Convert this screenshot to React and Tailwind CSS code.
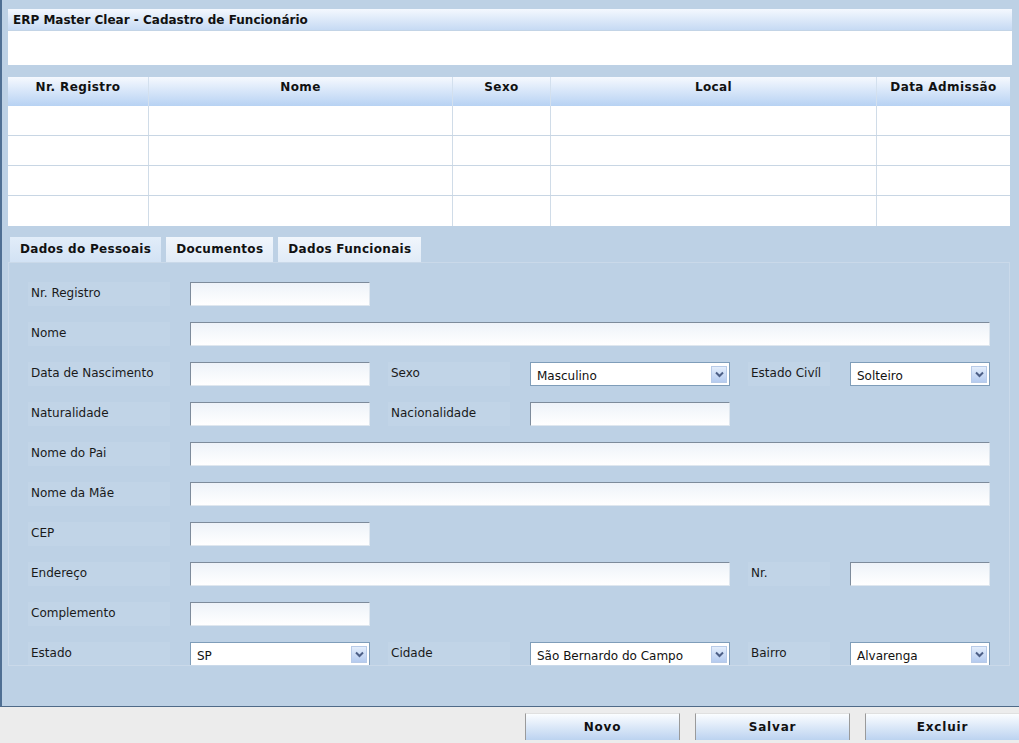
import React from 'react';

const font = { fontFamily: '"DejaVu Sans", Verdana, sans-serif' };

const columns = [
  { title: 'Nr. Registro', w: 'w-[141px]' },
  { title: 'Nome', w: 'w-[304px]' },
  { title: 'Sexo', w: 'w-[98px]' },
  { title: 'Local', w: 'w-[326px]' },
  { title: 'Data Admissão', w: 'flex-1' },
];

const Label = ({ text, w }) => (
  <div className={`${w} h-[24px] bg-[#c1d4e7] pl-[3px] pt-[3px] text-[12px] leading-[16px] text-[#1a1a1a] shrink-0`}>
    {text}
  </div>
);

const Input = ({ w }) => (
  <div
    className={`${w} h-[24px] shrink-0 border border-t-[#7d8b9b] border-l-[#7d8b9b] border-b-[#dfe7ef] border-r-[#dfe7ef] bg-gradient-to-b from-[#eef3f9] to-white`}
  />
);

const Select = ({ w, value }) => (
  <div className={`${w} h-[24px] shrink-0 flex items-center justify-between border border-[#7f9db9] bg-white pl-[6px] pr-[2px]`}>
    <span className="pt-[3px] text-[12px] leading-[16px] text-[#111]">{value}</span>
    <div className="w-[16px] h-[17px] flex items-center justify-center border border-[#b8cbe8] bg-gradient-to-b from-[#e4eefc] to-[#b5cbef]">
      <svg width="9" height="7" viewBox="0 0 9 7">
        <path d="M1 1.5 L4.5 5 L8 1.5" stroke="#4d5f86" strokeWidth="2" fill="none" />
      </svg>
    </div>
  </div>
);

const Row = ({ children }) => <div className="flex items-start h-[24px] mb-[16px]">{children}</div>;

const Tab = ({ children, active }) => (
  <div
    className={`h-[25px] px-[10px] text-[12px] font-bold tracking-[0.3px] leading-[25px] text-[#111] ${
      active ? 'bg-gradient-to-b from-[#e2edf9] to-[#d2e2f4]' : 'bg-gradient-to-b from-[#f1f6fc] to-[#e0ebf7]'
    }`}
  >
    {children}
  </div>
);

export default function App() {
  return (
    <div style={font} className="w-[1019px] h-[743px] overflow-hidden bg-[#ececec] flex flex-col">
      <div className="h-[707px] shrink-0 bg-[#bdd1e5] border-l-2 border-b border-l-[#4f6f93] border-b-[#4f6a88] pl-[6px] pr-[7px] pt-[9px]">
        {/* titulo */}
        <div className="h-[22px] bg-gradient-to-b from-[#f4f8fe] to-[#c6daf4] border-b border-[#c3d4e6] pl-[5px] pt-[2px] text-[12px] font-bold leading-[19px] text-[#111]">
          ERP Master Clear - Cadastro de Funcionário
        </div>
        <div className="h-[34px] bg-white" />

        {/* grid */}
        <div className="mt-[12px] mr-[2px] bg-white">
          <div className="flex h-[29px] bg-gradient-to-b from-[#f6f9fe] to-[#b7d2f3]">
            {columns.map((c, i) => (
              <div
                key={c.title}
                className={`${c.w} ${i < 4 ? 'border-r border-[#d3e0ee]' : ''} pt-[2px] text-center text-[12px] font-bold tracking-[0.4px] leading-[16px] text-[#111]`}
              >
                {c.title}
              </div>
            ))}
          </div>
          {[0, 1, 2, 3].map((r) => (
            <div key={r} className={`flex h-[30px] ${r < 3 ? 'border-b border-[#c8d6e4]' : ''}`}>
              {columns.map((c, i) => (
                <div key={c.title} className={`${c.w} ${i < 4 ? 'border-r border-[#d0dce8]' : ''}`} />
              ))}
            </div>
          ))}
        </div>

        {/* abas */}
        <div className="mt-[11px] flex items-end h-[25px] pl-[2px] gap-[5px]">
          <Tab active>Dados do Pessoais</Tab>
          <Tab>Documentos</Tab>
          <Tab>Dados Funcionais</Tab>
        </div>

        {/* painel */}
        <div className="h-[404px] mr-[2px] border border-[#cad9e9] overflow-hidden pl-[19px] pt-[19px]">
          <Row>
            <Label text="Nr. Registro" w="w-[142px]" />
            <div className="w-[20px]" />
            <Input w="w-[180px]" />
          </Row>
          <Row>
            <Label text="Nome" w="w-[142px]" />
            <div className="w-[20px]" />
            <Input w="w-[800px]" />
          </Row>
          <Row>
            <Label text=" Data de Nascimento" w="w-[142px]" />
            <div className="w-[20px]" />
            <Input w="w-[180px]" />
            <div className="w-[18px]" />
            <Label text=" Sexo" w="w-[122px]" />
            <div className="w-[20px]" />
            <Select w="w-[200px]" value="Masculino" />
            <div className="w-[18px]" />
            <Label text=" Estado Civíl" w="w-[82px]" />
            <div className="w-[20px]" />
            <Select w="w-[140px]" value="Solteiro" />
          </Row>
          <Row>
            <Label text=" Naturalidade" w="w-[142px]" />
            <div className="w-[20px]" />
            <Input w="w-[180px]" />
            <div className="w-[18px]" />
            <Label text=" Nacionalidade" w="w-[122px]" />
            <div className="w-[20px]" />
            <Input w="w-[200px]" />
          </Row>
          <Row>
            <Label text=" Nome do Pai" w="w-[142px]" />
            <div className="w-[20px]" />
            <Input w="w-[800px]" />
          </Row>
          <Row>
            <Label text=" Nome da Mãe" w="w-[142px]" />
            <div className="w-[20px]" />
            <Input w="w-[800px]" />
          </Row>
          <Row>
            <Label text=" CEP" w="w-[142px]" />
            <div className="w-[20px]" />
            <Input w="w-[180px]" />
          </Row>
          <Row>
            <Label text=" Endereço" w="w-[142px]" />
            <div className="w-[20px]" />
            <Input w="w-[540px]" />
            <div className="w-[18px]" />
            <Label text=" Nr." w="w-[82px]" />
            <div className="w-[20px]" />
            <Input w="w-[140px]" />
          </Row>
          <Row>
            <Label text=" Complemento" w="w-[142px]" />
            <div className="w-[20px]" />
            <Input w="w-[180px]" />
          </Row>
          <Row>
            <Label text=" Estado" w="w-[142px]" />
            <div className="w-[20px]" />
            <Select w="w-[180px]" value="SP" />
            <div className="w-[18px]" />
            <Label text=" Cidade" w="w-[122px]" />
            <div className="w-[20px]" />
            <Select w="w-[200px]" value="São Bernardo do Campo" />
            <div className="w-[18px]" />
            <Label text=" Bairro" w="w-[82px]" />
            <div className="w-[20px]" />
            <Select w="w-[140px]" value="Alvarenga" />
          </Row>
        </div>
      </div>

      {/* botoes */}
      <div className="flex pl-[525px] pt-[6px] gap-[15px]">
        {['Novo', 'Salvar', 'Excluir'].map((b) => (
          <button
            key={b}
            className="w-[155px] h-[27px] shrink-0 border-x border-t border-x-[#9a9a9a] border-t-[#e0e0e0] bg-gradient-to-b from-[#fbfdff] to-[#bcd3f0] text-[12px] font-bold tracking-[0.8px] text-[#111]"
          >
            {b}
          </button>
        ))}
      </div>
    </div>
  );
}
